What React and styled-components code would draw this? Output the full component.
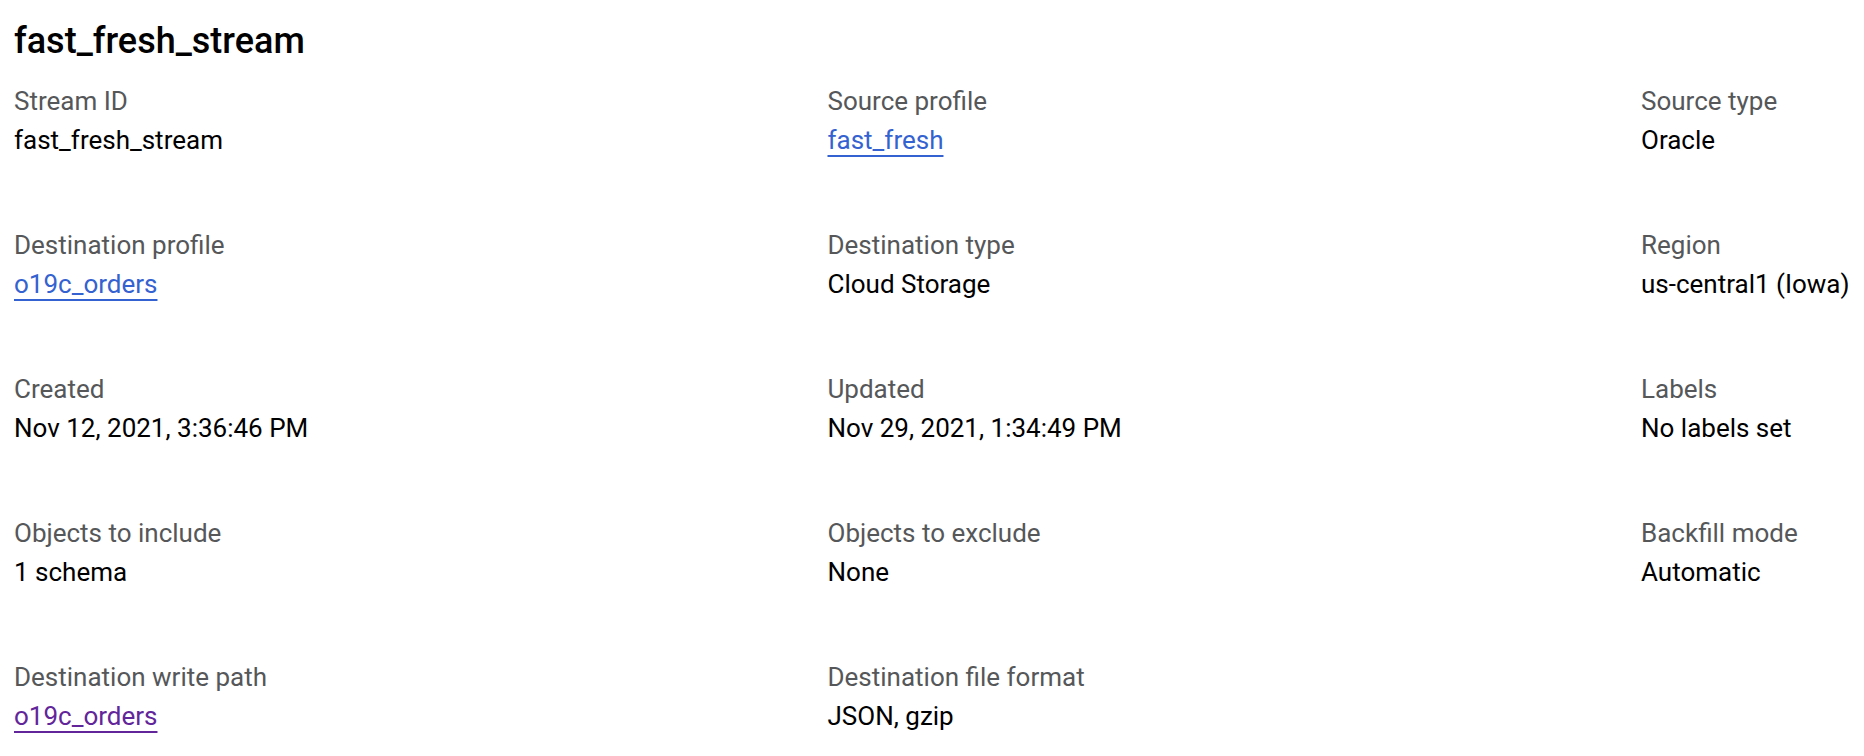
import React from 'react';
import styled, { createGlobalStyle } from 'styled-components';

const GlobalStyle = createGlobalStyle`
  html, body {
    margin: 0;
    padding: 0;
    background: #ffffff;
    overflow: hidden;
  }
  body {
    font-family: Roboto, "Liberation Sans", Arial, sans-serif;
    color: #000000;
  }
`;

const Page = styled.main`
  padding: 19px 0 0 14px;
`;

const Title = styled.h1`
  margin: 0 0 19px 0;
  font-size: 36px;
  line-height: 44px;
  font-weight: 500;
  color: #000000;
`;

const Grid = styled.dl`
  margin: 0;
  display: grid;
  grid-template-columns: repeat(3, 813.5px);
  row-gap: 66px;
`;

const Field = styled.div`
  display: flex;
  flex-direction: column;
  min-width: 0;
`;

const Label = styled.dt`
  font-size: 26px;
  line-height: 39px;
  color: #555759;
  white-space: nowrap;
`;

const Value = styled.dd`
  margin: 0;
  font-size: 26px;
  line-height: 39px;
  color: #000000;
  white-space: nowrap;
`;

const ValueLink = styled.a`
  color: ${props => (props.$visited ? '#62259a' : '#3462d0')};
  text-decoration: underline;
  text-decoration-thickness: 2px;
  text-underline-offset: 6px;
  cursor: pointer;
`;

const fields = [
  { label: 'Stream ID', value: 'fast_fresh_stream' },
  { label: 'Source profile', value: 'fast_fresh', link: true },
  { label: 'Source type', value: 'Oracle' },
  { label: 'Destination profile', value: 'o19c_orders', link: true },
  { label: 'Destination type', value: 'Cloud Storage' },
  { label: 'Region', value: 'us-central1 (Iowa)' },
  { label: 'Created', value: 'Nov 12, 2021, 3:36:46 PM' },
  { label: 'Updated', value: 'Nov 29, 2021, 1:34:49 PM' },
  { label: 'Labels', value: 'No labels set' },
  { label: 'Objects to include', value: '1 schema' },
  { label: 'Objects to exclude', value: 'None' },
  { label: 'Backfill mode', value: 'Automatic' },
  { label: 'Destination write path', value: 'o19c_orders', link: true, visited: true },
  { label: 'Destination file format', value: 'JSON, gzip' }
];

export default function App() {
  return (
    <>
      <GlobalStyle />
      <Page>
        <Title>fast_fresh_stream</Title>
        <Grid>
          {fields.map(item => (
            <Field key={item.label}>
              <Label>{item.label}</Label>
              <Value>
                {item.link ? (
                  <ValueLink $visited={item.visited} href="#">
                    {item.value}
                  </ValueLink>
                ) : (
                  item.value
                )}
              </Value>
            </Field>
          ))}
        </Grid>
      </Page>
    </>
  );
}
